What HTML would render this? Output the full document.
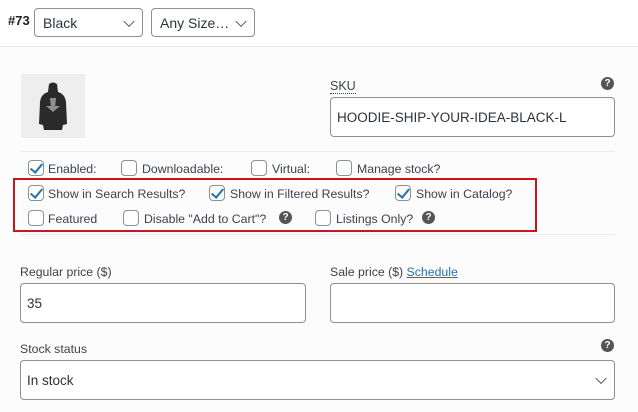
<!DOCTYPE html>
<html><head><meta charset="utf-8"><style>
*{box-sizing:border-box;margin:0;padding:0}
body{width:638px;height:412px;overflow:hidden;background:#fcfcfc;font-family:"Liberation Sans",sans-serif;font-size:12.3px;color:#3c434a;position:relative}
.top{position:absolute;left:0;top:0;width:638px;height:47px;background:#fff;border-bottom:1px solid #eaeaea}
.a{position:absolute}
.sel{position:absolute;border:1px solid #8c8f94;border-radius:4px;background:#fff;font-size:14px;color:#2c3338;padding:0 8px;display:flex;align-items:center}
.chev{position:absolute;right:9px;top:50%;width:8px;height:8px;border-right:1.6px solid #50575e;border-bottom:1.6px solid #50575e;transform:translateY(-70%) rotate(45deg)}
.inp{position:absolute;border:1px solid #8c8f94;border-radius:4px;background:#fff;font-size:13.5px;color:#2c3338;padding:0 6px;display:flex;align-items:center}
.cb{position:absolute;width:16px;height:16px;border:1px solid #8c8f94;border-radius:4px;background:#fff}
.cb.on::after{content:"";position:absolute;left:4px;top:0px;width:5px;height:10px;border-right:2px solid #2271b1;border-bottom:2px solid #2271b1;transform:rotate(40deg)}
.lb{position:absolute;font-size:12.3px;color:#3c434a;line-height:16px}
.q{position:absolute;width:13px;height:13px;border-radius:50%;background:#555;color:#fff;font-size:10px;font-weight:bold;text-align:center;line-height:13px}
.hr{position:absolute;height:1px;background:#eee}
</style></head><body>
<div class="top"></div>
<div class="a" style="left:8px;top:13px;font-weight:bold;font-size:13px;color:#1d2327">#73</div>
<div class="sel" style="left:34px;top:8px;width:109px;height:29px">Black<span class="chev"></span></div>
<div class="sel" style="left:151px;top:8px;width:104px;height:29px">Any Size…<span class="chev"></span></div>

<div class="a" style="left:21px;top:74px;width:64px;height:64px;background:#eee">
<svg width="64" height="64" viewBox="0 0 64 64"><path d="M28 10 Q32 7 36 10 L37 18 Q44 20 45 28 L46 50 L42 51 L41 56 L23 56 L22 51 L18 50 L19 28 Q20 20 27 18 Z" fill="#2a2a2a"/><path d="M29 24 L35 24 L34 34 L30 34 Z M25 32 L39 32 L32 38 Z" fill="#bbb" opacity=".7"/></svg>
</div>
<div class="a" style="left:330px;top:79px;font-size:12.5px;border-bottom:1px dotted #3c434a;line-height:14px">SKU</div>
<div class="q" style="left:601px;top:77px">?</div>
<div class="inp" style="left:330px;top:97px;width:285px;height:40px">HOODIE-SHIP-YOUR-IDEA-BLACK-L</div>
<div class="hr" style="left:20px;top:151px;width:595px"></div>

<div class="cb on" style="left:28px;top:160px"></div><div class="lb" style="left:48px;top:161px">Enabled:</div>
<div class="cb" style="left:121px;top:160px"></div><div class="lb" style="left:142px;top:161px">Downloadable:</div>
<div class="cb" style="left:251px;top:160px"></div><div class="lb" style="left:272px;top:161px">Virtual:</div>
<div class="cb" style="left:336px;top:160px"></div><div class="lb" style="left:357px;top:161px">Manage stock?</div>

<div class="a" style="left:13px;top:178px;width:524px;height:54px;border:2px solid #c8161d"></div>
<div class="cb on" style="left:28px;top:185px"></div><div class="lb" style="left:48px;top:186px">Show in Search Results?</div>
<div class="cb on" style="left:209px;top:185px"></div><div class="lb" style="left:230px;top:186px">Show in Filtered Results?</div>
<div class="cb on" style="left:395px;top:185px"></div><div class="lb" style="left:416px;top:186px">Show in Catalog?</div>
<div class="cb" style="left:28px;top:210px"></div><div class="lb" style="left:48px;top:211px">Featured</div>
<div class="cb" style="left:123px;top:210px"></div><div class="lb" style="left:144px;top:211px">Disable "Add to Cart"?</div>
<div class="q" style="left:279px;top:211px">?</div>
<div class="cb" style="left:315px;top:210px"></div><div class="lb" style="left:336px;top:211px">Listings Only?</div>
<div class="q" style="left:422px;top:211px">?</div>
<div class="hr" style="left:20px;top:234px;width:595px"></div>

<div class="a" style="left:20px;top:265px">Regular price ($)</div>
<div class="inp" style="left:20px;top:283px;width:286px;height:40px">35</div>
<div class="a" style="left:330px;top:265px">Sale price ($) <span style="color:#2271b1;text-decoration:underline">Schedule</span></div>
<div class="inp" style="left:330px;top:283px;width:285px;height:40px"></div>
<div class="a" style="left:20px;top:342px">Stock status</div>
<div class="q" style="left:601px;top:339px">?</div>
<div class="sel" style="left:20px;top:360px;width:595px;height:40px;padding-left:6px;font-size:13.5px">In stock<span class="chev"></span></div>
</body></html>
